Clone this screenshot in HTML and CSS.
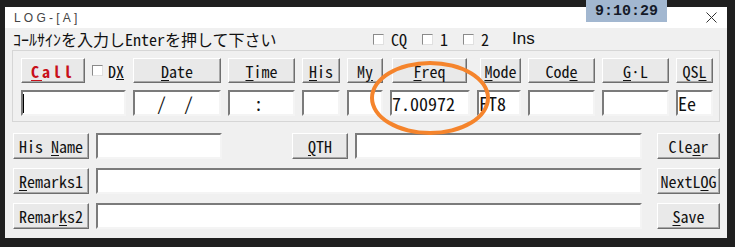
FILE: index.html
```html
<!DOCTYPE html>
<html lang="ja">
  <head>
    <meta charset="UTF-8" />
    <title>LOG-[A]</title>
    <link rel="stylesheet" href="styles.css">
  </head>
  <body>
    <div class="window">
      <div class="titlebar">
        <span class="title">LOG-[A]</span>
        <span class="clock">9:10:29</span>
        <svg class="close" width="11" height="11" viewBox="0 0 11 11">
          <path d="M0.5 0.5 L10.5 10.5 M10.5 0.5 L0.5 10.5" stroke="#333" stroke-width="1" fill="none" />
        </svg>
      </div>

      <div class="prompt">
        <span class="prompt-text">ｺｰﾙｻｲﾝを入力しEnterを押して下さい</span>
        <label class="check"><span class="box"></span>CQ</label>
        <label class="check"><span class="box"></span>1</label>
        <label class="check"><span class="box"></span>2</label>
        <span class="ins">Ins</span>
      </div>

      <div class="group">
        <button class="btn call"><u>C</u>all</button>
        <label class="check dx"><span class="box"></span><span>D<u>X</u></span></label>
        <button class="btn"><u>D</u>ate</button>
        <button class="btn"><u>T</u>ime</button>
        <button class="btn"><u>H</u>is</button>
        <button class="btn">M<u>y</u></button>
        <button class="btn freq"><u>F</u>req</button>
        <button class="btn mode"><u>M</u>ode</button>
        <button class="btn">Cod<u>e</u></button>
        <button class="btn"><u>G</u>·L</button>
        <button class="btn">QS<u>L</u></button>

        <div class="field call-field"><span class="caret"></span></div>
        <div class="field date">/&nbsp;&nbsp;/</div>
        <div class="field time">:</div>
        <div class="field"></div>
        <div class="field"></div>
        <div class="field">7.00972</div>
        <div class="field">FT8</div>
        <div class="field"></div>
        <div class="field"></div>
        <div class="field">Ee</div>
      </div>

      <div class="rows">
        <div class="row">
          <button class="btn wide">His <u>N</u>ame</button>
          <div class="field name"></div>
          <button class="btn qth"><u>Q</u>TH</button>
          <div class="field grow"></div>
          <button class="btn side">Cle<u>a</u>r</button>
        </div>
        <div class="row">
          <button class="btn wide"><u>R</u>emarks1</button>
          <div class="field grow"></div>
          <button class="btn side">NextL<u>O</u>G</button>
        </div>
        <div class="row">
          <button class="btn wide">Remar<u>k</u>s2</button>
          <div class="field grow"></div>
          <button class="btn side"><u>S</u>ave</button>
        </div>
      </div>

      <!-- highlight drawn over the screenshot -->
      <div class="mark"></div>
    </div>
  </body>
</html>
```

FILE: styles.css
```css
body {
  margin: 0;
  background-color: #1f1f1f;
  font-family: "Noto Sans CJK JP", sans-serif;
  font-feature-settings: "hwid";
  color: #111;
}
.window {
  position: relative;
  margin: 7px 0 0 5px;
  width: 722px;
  height: 231px;
  background-color: #f0f0f0;
}
.titlebar {
  height: 21px;
  background-color: #ffffff;
  display: flex;
  align-items: center;
  padding: 0 10px 0 9px;
}
.title {
  font-family: "Liberation Sans", sans-serif;
  font-feature-settings: normal;
  font-size: 12px;
  letter-spacing: 3.2px;
  color: #444;
}
.clock {
  position: absolute;
  left: 581px;
  top: -7px;
  width: 81px;
  height: 22px;
  background-color: #a2b7d0;
  font-family: "Liberation Mono", monospace;
  font-feature-settings: normal;
  font-weight: bold;
  font-size: 15px;
  line-height: 24px;
  text-align: center;
  color: #151a28;
}
.close {
  margin-left: auto;
}
.prompt {
  height: 22px;
  display: flex;
  align-items: center;
  padding-left: 8px;
  font-size: 16px;
}
.prompt-text {
  width: 360px;
  white-space: nowrap;
}
.check {
  display: flex;
  align-items: center;
  gap: 7px;
  margin-right: 15px;
  font-size: 16px;
}
.box {
  width: 9px;
  height: 9px;
  background-color: #ffffff;
  border: 1px solid;
  border-color: #8a8a8a #e0e0e0 #e0e0e0 #8a8a8a;
}
.ins {
  margin-left: 8px;
  font-family: "Liberation Sans", sans-serif;
  font-size: 17px;
}
.group {
  margin: 0 7px;
  border: 1px solid #d6d6d6;
  padding: 7px 8px 5px 8px;
  display: grid;
  grid-template-columns: 64px 34px 88px 67px 38px 36px 80px 44px 67px 67px 37px;
  grid-template-rows: 25px 26px;
  column-gap: 7px;
  row-gap: 7px;
}
.btn {
  margin: 0;
  padding: 0;
  background-color: #e9e9e9;
  border: 1px solid;
  border-color: #ffffff #6e6e6e #6e6e6e #ffffff;
  box-shadow: inset -1px -1px 0 #a8a8a8;
  font-family: "Noto Sans CJK JP", sans-serif;
  font-feature-settings: "hwid";
  font-size: 16px;
  line-height: 1;
  color: #111;
}
.btn u {
  text-underline-offset: 2px;
}
.call {
  color: #c8101a;
  font-weight: bold;
  letter-spacing: 3px;
}
.dx {
  margin-right: 0;
  gap: 5px;
}
.freq {
  margin: 0 3px 0 2px;
}
.mode {
  margin-left: 3px;
}
.field {
  background-color: #ffffff;
  border: 2px solid;
  border-color: #7b7b7b #f4f4f4 #f4f4f4 #7b7b7b;
  font-size: 18px;
  line-height: 22px;
  white-space: nowrap;
  overflow: hidden;
}
.date {
  padding-left: 22px;
}
.time {
  padding-left: 24px;
}
.call-field {
  grid-column: span 2;
}
.caret {
  display: block;
  width: 1px;
  height: 19px;
  margin-top: 2px;
  background-color: #000;
}
.rows {
  margin-top: 11px;
  padding: 0 7px 0 8px;
  display: flex;
  flex-direction: column;
  gap: 9px;
}
.row {
  display: flex;
  height: 26px;
  gap: 7px;
}
.wide {
  width: 76px;
}
.name {
  width: 122px;
}
.qth {
  width: 56px;
  margin-left: 63px;
}
.grow {
  flex: 1;
}
.side {
  width: 63px;
  margin-left: 8px;
}
.mark {
  position: absolute;
  left: 365px;
  top: 54px;
  width: 112px;
  height: 66px;
  border: 4px solid #f5842c;
  border-radius: 50%;
}
```
